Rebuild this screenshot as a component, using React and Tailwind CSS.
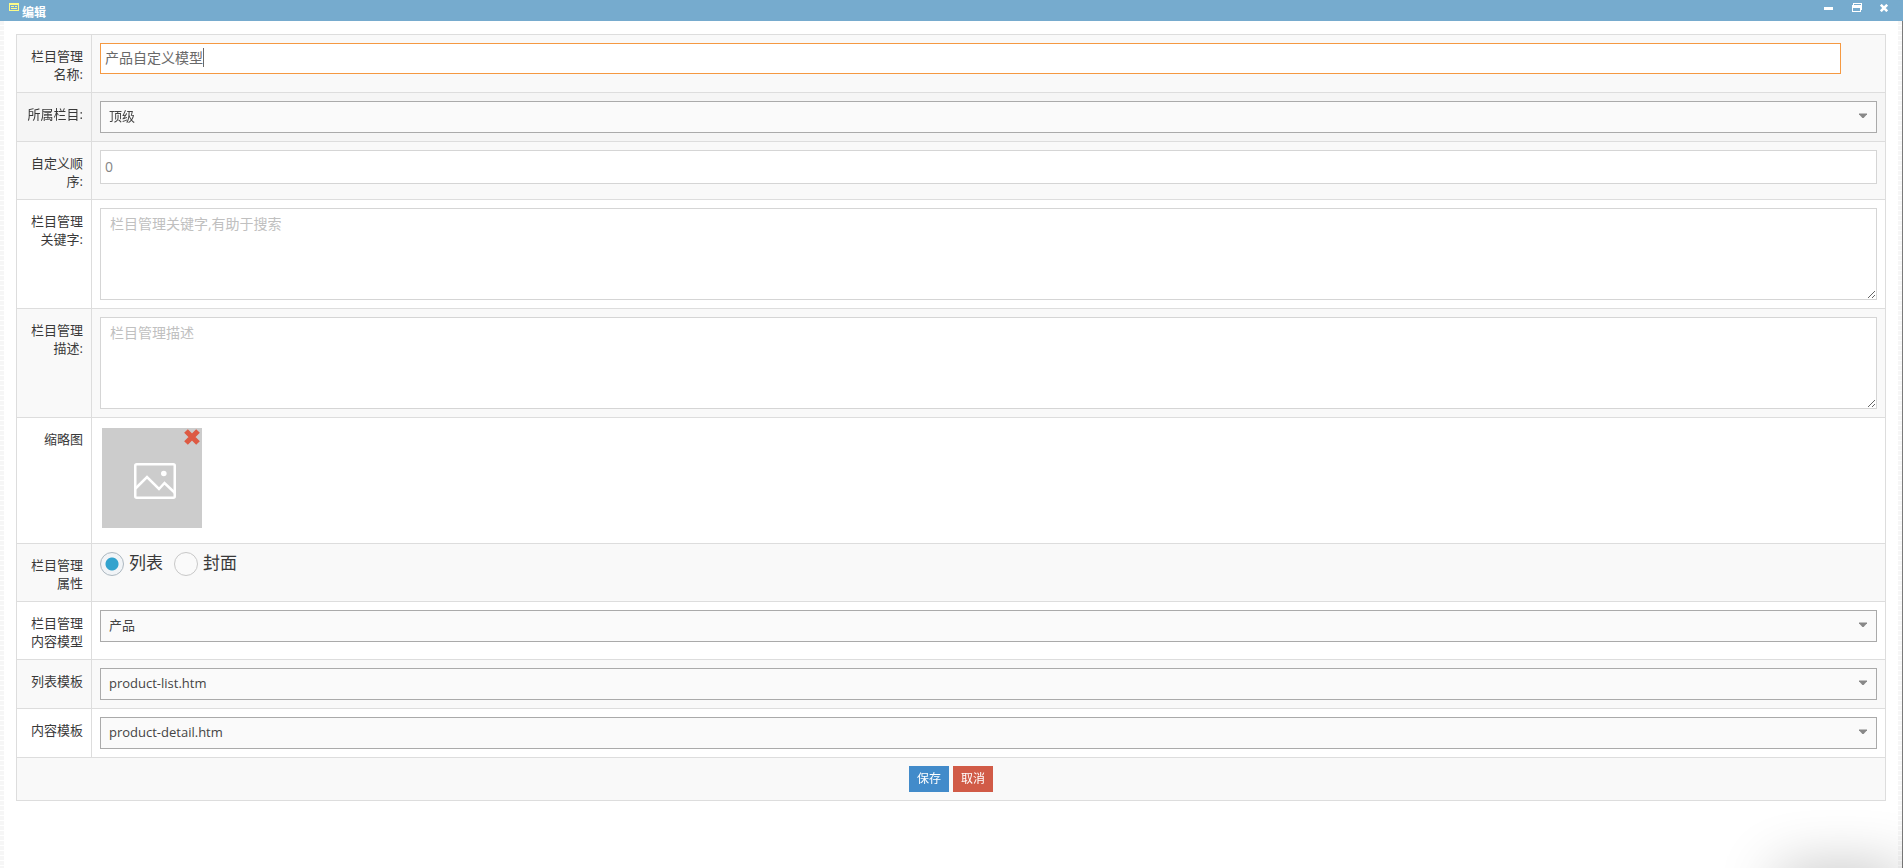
import { useId } from "react";

const FONT = "font-['Open_Sans','Noto_Sans_CJK_SC',sans-serif]";

function Row({ label, htmlFor, tone, children }) {
  return (
    <tr className={tone}>
      <th scope="row" className="border border-[#dddddd] px-2 pt-3 pb-[9px] text-right align-top font-normal leading-[18px] text-[#393939]">
        <label htmlFor={htmlFor}>{label}</label>
      </th>
      <td className="border border-[#dddddd] p-2 align-top">{children}</td>
    </tr>
  );
}

function Select({ id, options }) {
  return (
    <div className="grid items-center">
      <select
        id={id}
        className="col-start-1 row-start-1 h-8 w-full appearance-none border border-[#aaaaaa] bg-[#fafafa] px-2 pb-px text-[13px] text-[#444444] outline-none"
      >
        {options.map((o) => (
          <option key={o}>{o}</option>
        ))}
      </select>
      <svg viewBox="0 0 8 5" className="pointer-events-none col-start-1 row-start-1 mr-2.5 mb-[3px] h-[5px] w-2 justify-self-end" aria-hidden="true">
        <path d="M0 .5h8v.7L4.600 5h-1.200L0 1.200z" fill="#888888" />
      </svg>
    </div>
  );
}

function Radio({ label, defaultChecked }) {
  return (
    <label className="flex items-center gap-[5px] text-[17px] leading-[22px] text-[#393939]">
      <input
        type="radio"
        name="kind"
        defaultChecked={defaultChecked}
        className="size-6 appearance-none rounded-full border border-[#c8c8c8] bg-[#fafafa] checked:border-[#adb8c0] checked:bg-[radial-gradient(circle,#32a3ce_6px,#f1f4f7_7px)]"
      />
      <span className="pb-0.5">{label}</span>
    </label>
  );
}

export default function App() {
  const id = useId();
  const area = "block h-[92px] w-full resize-y border border-[#d5d5d5] bg-white px-[9px] py-1 text-sm leading-[22px] text-[#858585] placeholder:text-[#c0c0c0] outline-none";
  const stripes = "w-1 shrink-0 bg-[repeating-linear-gradient(to_bottom,#f6f6f6_0px,#f6f6f6_4px,#ffffff_4px,#ffffff_5px)]";
  return (
    <div className={`relative flex h-screen flex-col overflow-hidden bg-white text-[13px] text-[#393939] ${FONT}`}>
      <header className="flex h-[21px] shrink-0 items-start justify-between bg-[#76abce] text-white">
        <h1 className="flex items-start gap-[3px] pl-[9px] text-xs font-bold leading-[26px]">
          <svg viewBox="0 0 10 8" className="mt-[3px] h-2 w-2.5" shapeRendering="crispEdges" aria-hidden="true">
            <path d="M0 0h10v8H0z" fill="#fbfb88" />
            <path d="M1 2h8v5H1z" fill="#76abce" />
            <path d="M2 3h3v1H2zM2 5h6v1H2zM6 3h2v1H6z" fill="#fbfb88" />
          </svg>
          编辑
        </h1>
        <div className="flex gap-[18px] pt-[3px] pr-3.5">
          <button type="button" aria-label="最小化" className="h-[9px] w-2.5">
            <svg viewBox="0 0 9 9" className="block size-[9px]"><path d="M0 4h9v3H0z" fill="currentColor" /></svg>
          </button>
          <button type="button" aria-label="还原" className="h-[9px] w-2.5">
            <svg viewBox="0 0 10 9" className="block h-[9px] w-2.5" shapeRendering="crispEdges">
              <path fillRule="evenodd" fill="currentColor" d="M1 0h9v7H9V1H2v1H1zM0 2h9v7H0zM1 5v3h7V5z" />
            </svg>
          </button>
          <button type="button" aria-label="关闭" className="h-[9px] w-[9px]">
            <svg viewBox="0 0 8 8" className="block size-2"><path d="M.8.8l6.400 6.400M7.200.8L.8 7.200" stroke="currentColor" strokeWidth="2.600" /></svg>
          </button>
        </div>
      </header>
      <div className="flex min-h-0 flex-1">
        <div className={stripes} />
        <main className="min-w-0 flex-1 px-3 pt-[13px]">
          <form onSubmit={(e) => e.preventDefault()}>
            <table className="w-full table-fixed border-collapse">
              <colgroup>
                <col className="w-[75px]" />
                <col />
              </colgroup>
              <tbody>
                <Row tone="bg-[#f9f9f9]" label="栏目管理名称:" htmlFor={id + "name"}>
                  <div className="grid w-[98%]">
                    <input id={id + "name"} autoFocus defaultValue="产品自定义模型" className="col-start-1 row-start-1 h-[31px] w-full border border-[#f59942] bg-white px-1 pb-[3px] text-sm text-[#696969] caret-transparent outline-none" />
                    <span aria-hidden="true" className="pointer-events-none col-start-1 row-start-1 mt-[5px] ml-[103px] h-[19px] w-px bg-[#696969]" />
                  </div>
                </Row>
                <Row tone="bg-[#f5f5f5]" label="所属栏目:" htmlFor={id + "parent"}>
                  <Select id={id + "parent"} options={["顶级"]} />
                </Row>
                <Row tone="bg-[#f9f9f9]" label="自定义顺序:" htmlFor={id + "order"}>
                  <input id={id + "order"} defaultValue="0" className="block h-[34px] w-full border border-[#d5d5d5] bg-white px-1 pb-0.5 text-sm text-[#858585] outline-none" />
                </Row>
                <Row tone="bg-white" label="栏目管理关键字:" htmlFor={id + "keys"}>
                  <textarea id={id + "keys"} className={area} placeholder="栏目管理关键字,有助于搜索" />
                </Row>
                <Row tone="bg-[#f9f9f9]" label="栏目管理描述:" htmlFor={id + "desc"}>
                  <textarea id={id + "desc"} className={area} placeholder="栏目管理描述" />
                </Row>
                <Row tone="bg-white" label="缩略图">
                  <div className="mx-0.5 mt-0.5 mb-[7px] grid size-[100px] bg-[#cccccc]">
                    <svg viewBox="0 0 42 36" className="col-start-1 row-start-1 mt-[35px] ml-8 h-9 w-[42px]" fill="none" stroke="#ffffff" strokeWidth="2.500" aria-hidden="true">
                      <rect x="1.250" y="1.250" width="39.500" height="33.500" rx="1.500" />
                      <path d="M1.500 25.500L13 14 25 26l5.500-6L41 30" />
                      <circle cx="29.800" cy="10.500" r="2.800" fill="#ffffff" stroke="none" />
                    </svg>
                    <button type="button" aria-label="删除" className="col-start-1 row-start-1 mt-px mr-0.5 h-4 w-4 justify-self-end">
                      <svg viewBox="0 0 16 16" className="block size-4"><path d="M2 2l12 12M14 2L2 14" stroke="#dd5a43" strokeWidth="5.200" /></svg>
                    </button>
                  </div>
                </Row>
                <Row tone="bg-[#f9f9f9]" label="栏目管理属性">
                  <div className="flex gap-[11px]">
                    <Radio label="列表" defaultChecked />
                    <Radio label="封面" />
                  </div>
                </Row>
                <Row tone="bg-white" label="栏目管理内容模型" htmlFor={id + "model"}>
                  <Select id={id + "model"} options={["产品"]} />
                </Row>
                <Row tone="bg-[#f9f9f9]" label="列表模板" htmlFor={id + "list"}>
                  <Select id={id + "list"} options={["product-list.htm"]} />
                </Row>
                <Row tone="bg-white" label="内容模板" htmlFor={id + "detail"}>
                  <Select id={id + "detail"} options={["product-detail.htm"]} />
                </Row>
                <tr className="bg-[#f9f9f9]">
                  <td colSpan={2} className="border border-[#dddddd] p-2">
                    <div className="flex justify-center gap-1">
                      <button type="submit" className="h-[26px] w-10 bg-[#428bca] text-xs text-white">保存</button>
                      <button type="button" className="h-[26px] w-10 bg-[#d15b47] text-xs text-white">取消</button>
                    </div>
                  </td>
                </tr>
              </tbody>
            </table>
          </form>
        </main>
        <div className={stripes} />
        <div className="w-px shrink-0 bg-[#7b7b7b]" />
      </div>
      <div className="pointer-events-none absolute right-0 -bottom-11 h-10 w-[124px] shadow-[0_0_60px_rgba(0,0,0,0.3)]" />
    </div>
  );
}
